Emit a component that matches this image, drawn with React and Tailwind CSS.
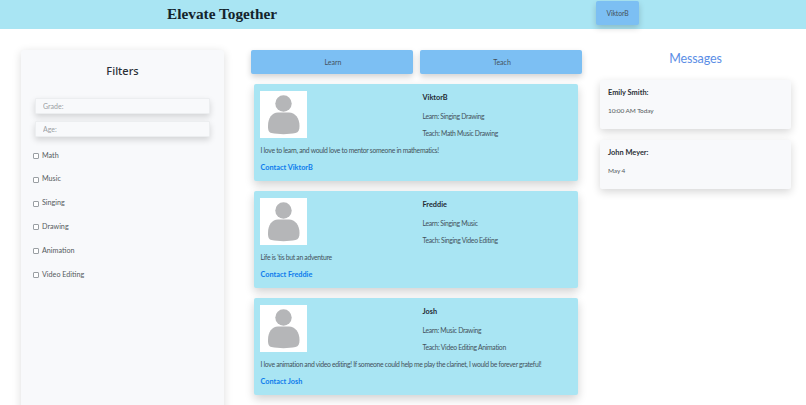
const subjects = ['Math', 'Music', 'Singing', 'Drawing', 'Animation', 'Video Editing']

const people = [
  { name: 'ViktorB', learn: 'Singing Drawing', teach: 'Math Music Drawing', bio: 'I love to learn, and would love to mentor someone in mathematics!' },
  { name: 'Freddie', learn: 'Singing Music', teach: 'Singing Video Editing', bio: "Life is 'tis but an adventure" },
  { name: 'Josh', learn: 'Music Drawing', teach: 'Video Editing Animation', bio: 'I love animation and video editing! If someone could help me play the clarinet, I would be forever grateful!' },
]

const messages = [
  { from: 'Emily Smith:', when: '10:00 AM Today' },
  { from: 'John Meyer:', when: 'May 4' },
]

function Avatar() {
  return (
    <svg className="w-[47px] h-[47px] shrink-0 bg-white" viewBox="0 0 47 47">
      <circle cx="23.5" cy="12.5" r="8.200" fill="#b5b6b8" />
      <path d="M8 35c0-8 4-13.500 10-13.500h11c6 0 10.500 5.500 10.500 13.500 0 4-1 6.200-4 7-7 1.500-17 1.500-24 0-3-.8-3.500-3-3.500-7z" fill="#b5b6b8" />
    </svg>
  )
}

function PersonCard({ person }) {
  return (
    <div className="h-[97px] bg-[#a9e5f3] rounded-[2px] shadow-[0_4px_10px_rgba(0,0,0,0.18)] pl-[6.500px] pt-[7px]">
      <div className="flex">
        <Avatar />
        <div className="ml-[115.500px] mt-[0.500px]">
          <p className="text-[7.300px] leading-[12px] font-bold text-[#1f2a33]">{person.name}</p>
          <p className="text-[6.800px] leading-[10px] tracking-[-0.3px] mt-[7px] text-[#44525c]">Learn: {person.learn}</p>
          <p className="text-[6.800px] leading-[10px] tracking-[-0.3px] mt-[7px] text-[#44525c]">Teach: {person.teach}</p>
        </div>
      </div>
      <p className="text-[6.800px] leading-[10px] tracking-[-0.3px] mt-[7px] pl-[0.500px] text-[#44525c] whitespace-nowrap">{person.bio}</p>
      <a className="block text-[7.300px] leading-[12px] mt-[7px] pl-[0.500px] font-bold text-[#0d7bec]">Contact {person.name}</a>
    </div>
  )
}

export default function App() {
  return (
    <div className="h-[405px] w-[806px] overflow-hidden bg-white font-['Lato',sans-serif]">
      <header className="h-[29px] bg-[#a9e5f3] flex items-start">
        <h1 className="ml-[167px] w-[429px] font-['Liberation_Serif',serif] font-bold text-[15.300px] leading-[28px] text-[#14232b]">Elevate Together</h1>
        <button className="mt-[1px] w-[43px] h-[24px] bg-[#7cbff3] rounded-[2px] shadow-[0_3px_6px_rgba(0,0,0,0.18)] text-[6.800px] tracking-[-0.1px] text-[#44525c]">ViktorB</button>
      </header>

      <main className="flex items-start pl-[21px]">
        <aside className="mt-[21px] w-[203px] h-[420px] bg-[#f8f9fb] rounded-[3px] shadow-[0_2px_10px_rgba(0,0,0,0.14)] px-[12px]">
          <h2 className="mt-[13px] text-center text-[11px] leading-[16px] font-medium font-['Noto_Sans',sans-serif] text-[#2b3036]">Filters</h2>
          <div className="mt-[19px] flex flex-col gap-[7px] px-[2px]">
            <input placeholder="Grade:" className="h-[16px] bg-[#f8f9fb] border border-[#eceef0] rounded-[1px] shadow-[0_3px_6px_rgba(0,0,0,0.15)] px-[7px] text-[7px] placeholder:text-[#9a9fa4] outline-none" />
            <input placeholder="Age:" className="h-[16px] bg-[#f8f9fb] border border-[#eceef0] rounded-[1px] shadow-[0_3px_6px_rgba(0,0,0,0.15)] px-[7px] text-[7px] placeholder:text-[#9a9fa4] outline-none" />
          </div>
          <ul className="mt-[14px] flex flex-col gap-[13.800px]">
            {subjects.map((s) => (
              <li key={s} className="flex items-center h-[10px]">
                <span className="w-[6px] h-[6px] border border-[#9a9fa3] rounded-[1px] bg-white" />
                <span className="ml-[3px] text-[7.200px] text-[#555b60]">{s}</span>
              </li>
            ))}
          </ul>
        </aside>

        <section className="mt-[21px] ml-[26.500px] w-[331px]">
          <div className="flex gap-[7px]">
            <button className="flex-1 h-[24px] pl-[3px] bg-[#7cbff3] rounded-[2px] shadow-[0_3px_6px_rgba(0,0,0,0.18)] text-[7px] text-[#44525c]">Learn</button>
            <button className="flex-1 h-[24px] pl-[3px] bg-[#7cbff3] rounded-[2px] shadow-[0_3px_6px_rgba(0,0,0,0.18)] text-[7px] text-[#44525c]">Teach</button>
          </div>
          <div className="mt-[10px] ml-[3px] w-[324px] flex flex-col gap-[10px]">
            {people.map((p) => (
              <PersonCard key={p.name} person={p} />
            ))}
          </div>
        </section>

        <section className="ml-[18.500px] w-[191px]">
          <h2 className="mt-[20px] text-center text-[12.500px] leading-[20px] tracking-[-0.1px] text-[#5b8ee6]">Messages</h2>
          <div className="mt-[11px] flex flex-col gap-[11px]">
            {messages.map((m) => (
              <div key={m.from} className="h-[49px] bg-[#f8f9fb] rounded-[2px] shadow-[0_3px_8px_rgba(0,0,0,0.16)] pl-[8px] pt-[7px]">
                <p className="text-[7.400px] leading-[12px] font-bold text-[#2b3036]">{m.from}</p>
                <p className="text-[6.500px] leading-[10px] tracking-[-0.1px] mt-[7px] text-[#555b60]">{m.when}</p>
              </div>
            ))}
          </div>
        </section>
      </main>
    </div>
  )
}
